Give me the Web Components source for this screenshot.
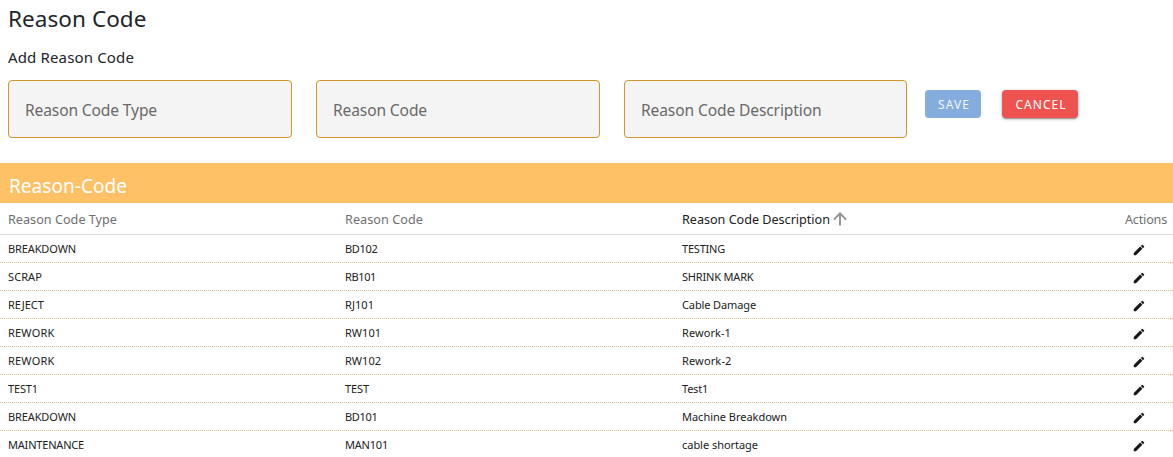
<!DOCTYPE html>
<html lang="en">
<head>
<meta charset="utf-8">
<title>Reason Code</title>
<style>
html,body{margin:0;padding:0;background:#fff;overflow:hidden}
body{font-family:"Noto Sans","Open Sans",sans-serif;color:#212529}
</style>
</head>
<body>
<reason-page></reason-page>
<script>
// A single line of text whose tracking is adjusted to span a given width.
class TextRun extends HTMLElement{
  connectedCallback(){
    const root=this.attachShadow({mode:'open'});
    root.innerHTML='<style>:host{display:inline-block;white-space:nowrap}span{display:inline-block}</style><span><slot></slot></span>';
    const w=+this.getAttribute('w'),span=root.querySelector('span'),n=this.textContent.length;
    if(w){
      span.style.letterSpacing='0';
      const ls=(w-span.getBoundingClientRect().width)/n;
      span.style.letterSpacing=ls.toFixed(3)+'px';
    }
  }
}
class OutlinedField extends HTMLElement{
  connectedCallback(){
    this.attachShadow({mode:'open'}).innerHTML=`<style>
    :host{display:flex;align-items:center;box-sizing:border-box;height:58px;padding:1px 16px 0;border:1px solid #d0952b;border-radius:4px;background:#f4f4f4;color:#6a6a6a;font-size:15.6px;line-height:24px}
    </style><slot></slot>`;
  }
}
class ActionButton extends HTMLElement{
  connectedCallback(){
    this.attachShadow({mode:'open'}).innerHTML=`<style>
    :host{display:flex}
    button{font:400 12px/28px "Noto Sans","Open Sans",sans-serif;width:100%;height:28px;padding:1px 0 0 2px;border:0;border-radius:4px;color:#fff;background:#ef5350;display:flex;align-items:center;justify-content:center;box-shadow:0 2px 1px -1px rgba(0,0,0,.2),0 1px 2px rgba(0,0,0,.2),0 1px 4px rgba(0,0,0,.16)}
    :host([disabled]) button{background:#84acdc;color:#f2f7fc;box-shadow:none}
    </style><button type="button"><slot></slot></button>`;
  }
}
class TableRow extends HTMLElement{
  connectedCallback(){
    this.attachShadow({mode:'open'}).innerHTML=`<style>
    :host{display:grid;grid-template-columns:337px 337px 1fr 58px;align-items:center;box-sizing:border-box;height:28px;padding-left:8px;border-bottom:1px dotted #dcbd94;font-size:11px;line-height:16px;color:#212121}
    :host([head]){height:32px;padding-top:2px;border-bottom:1px solid #dcdcdc;font-size:12.6px;line-height:18px;color:#707070}
    svg{display:block;margin:2px 0 0 17px}
    </style><slot></slot>${this.hasAttribute('head')?'':'<svg width="14" height="14" viewBox="0 0 24 24" fill="#161616"><path d="M3 17.25V21h3.75L17.81 9.94l-3.75-3.75L3 17.25zM20.71 7.04a1 1 0 0 0 0-1.41l-2.34-2.34a1 1 0 0 0-1.41 0l-1.83 1.83 3.75 3.75 1.83-1.83z"/></svg>'}`;
  }
}
class ReasonPage extends HTMLElement{
  connectedCallback(){
    const rows=[
      [['BREAKDOWN',68],['BD102',32.5],['TESTING',43]],
      [['SCRAP',34],['RB101',31],['SHRINK MARK',71.5]],
      [['REJECT',36],['RJ101',29],['Cable Damage',74]],
      [['REWORK',46.5],['RW101',36],['Rework-1',49]],
      [['REWORK',46.5],['RW102',36],['Rework-2',49.5]],
      [['TEST1',30],['TEST',24],['Test1',26]],
      [['BREAKDOWN',68],['BD101',32.5],['Machine Breakdown',105]],
      [['MAINTENANCE',76],['MAN101',43],['cable shortage',76]]];
    this.attachShadow({mode:'open'}).innerHTML=`<style>
    :host{display:block;width:1173px;height:457px;overflow:hidden}
    h1,h2,h3{margin:0;font-weight:400}
    h1{font-size:22.5px;line-height:32px;padding:3px 8px 0}
    h2{font-size:15px;line-height:24px;padding:10px 8px 0;height:24px}
    form{display:grid;grid-template-columns:284px 24px 284px 24px 283px 18px 56px 21px 76px;padding:11px 8px 0;height:58px;align-items:start}
    outlined-field:nth-of-type(1){grid-column:1}
    outlined-field:nth-of-type(2){grid-column:3}
    outlined-field:nth-of-type(3){grid-column:5}
    action-button{margin-top:10px;grid-column:9}
    action-button[disabled]{grid-column:7}
    h3{margin-top:25px;height:40px;box-sizing:border-box;padding:10px 9px 0;background:#ffc166;color:#fff;font-size:19px;line-height:27px}
    .sorted{display:flex;align-items:center;color:#212121;gap:3px}
    .sorted svg{margin-top:-2px}
    </style>
    <h1><text-run w="138.5">Reason Code</text-run></h1>
    <h2><text-run w="126">Add Reason Code</text-run></h2>
    <form>
      <outlined-field><text-run w="132">Reason Code Type</text-run></outlined-field>
      <outlined-field><text-run w="94">Reason Code</text-run></outlined-field>
      <outlined-field><text-run w="180.5">Reason Code Description</text-run></outlined-field>
      <action-button disabled><text-run w="32">SAVE</text-run></action-button>
      <action-button><text-run w="51">CANCEL</text-run></action-button>
    </form>
    <h3><text-run w="118">Reason-Code</text-run></h3>
    <table-row head>
      <text-run w="109">Reason Code Type</text-run><text-run w="78">Reason Code</text-run>
      <span class="sorted"><text-run w="148">Reason Code Description</text-run><svg width="14" height="14" viewBox="0 0 14 14" fill="none" stroke="#929292" stroke-width="1.9"><path d="M7 13.5V1.5M.8 7.6l6.2-6.2 6.2 6.2"/></svg></span>
      <text-run w="42" style="margin-left:10px">Actions</text-run>
    </table-row>
    ${rows.map(r=>`<table-row>${r.map(([t,w])=>`<text-run w="${w}">${t}</text-run>`).join('')}</table-row>`).join('')}`;
  }
}
customElements.define('text-run',TextRun);
customElements.define('outlined-field',OutlinedField);
customElements.define('action-button',ActionButton);
customElements.define('table-row',TableRow);
customElements.define('reason-page',ReasonPage);
</script>
</body>
</html>
